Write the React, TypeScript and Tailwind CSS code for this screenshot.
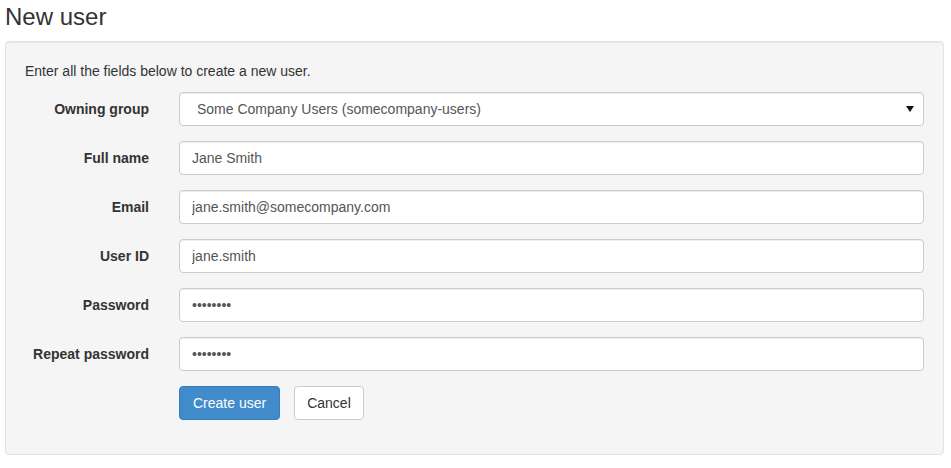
const FIELDS = [
  { label: 'Full name', value: 'Jane Smith', type: 'text' },
  { label: 'Email', value: 'jane.smith@somecompany.com', type: 'text' },
  { label: 'User ID', value: 'jane.smith', type: 'text' },
  { label: 'Password', value: 'password', type: 'password' },
  { label: 'Repeat password', value: 'password', type: 'password' },
];

const inputCls =
  'h-[34px] w-full rounded-[4px] border border-[#cccccc] bg-white px-[12px] text-[14px] text-[#555555] shadow-[inset_0_1px_1px_rgba(0,0,0,0.075)] outline-none font-["Liberation_Sans",Arial,sans-serif]';

function Row({ label, children }: { label: string; children: React.ReactNode }) {
  return (
    <div className="mb-[15px] flex items-center">
      <label className="w-[124px] shrink-0 text-right text-[14px] font-bold leading-[20px] text-[#333333]">
        {label}
      </label>
      <div className="ml-[30px] flex-1">{children}</div>
    </div>
  );
}

export default function App() {
  return (
    <div className='min-h-[468px] bg-white pl-[5px] pr-[7px] pt-[4px] font-["Liberation_Sans",Arial,sans-serif] text-[#333333]'>
      <h3 className="mb-[11px] text-[24px] leading-[26.4px] font-normal">New user</h3>

      <div className="rounded-[4px] border border-[#e3e3e3] bg-[#f5f5f5] px-[19px] pt-[19px] pb-[19px] shadow-[inset_0_1px_1px_rgba(0,0,0,0.05)]">
        <p className="mb-[11px] text-[14px] leading-[20px]">Enter all the fields below to create a new user.</p>

        <Row label="Owning group">
          <div className={inputCls + ' flex items-center justify-between pl-[17px] pr-[8px]'}>
            <span>Some Company Users (somecompany-users)</span>
            <svg width="8" height="6" viewBox="0 0 8 6" className="mr-[1px]">
              <path d="M0 0 L8 0 L4 6 Z" fill="#111111" />
            </svg>
          </div>
        </Row>

        {FIELDS.map((f) => (
          <Row key={f.label} label={f.label}>
            <input className={inputCls} type={f.type} defaultValue={f.value} readOnly />
          </Row>
        ))}

        <div className="mb-[15px] flex items-center pl-[154px]">
          <button className="h-[34px] rounded-[4px] border border-[#357ebd] bg-[#428bca] px-[13px] text-[14px] text-white">
            Create user
          </button>
          <button className="ml-[14px] h-[34px] rounded-[4px] border border-[#cccccc] bg-white px-[12px] text-[14px] text-[#333333]">
            Cancel
          </button>
        </div>
      </div>
    </div>
  );
}
